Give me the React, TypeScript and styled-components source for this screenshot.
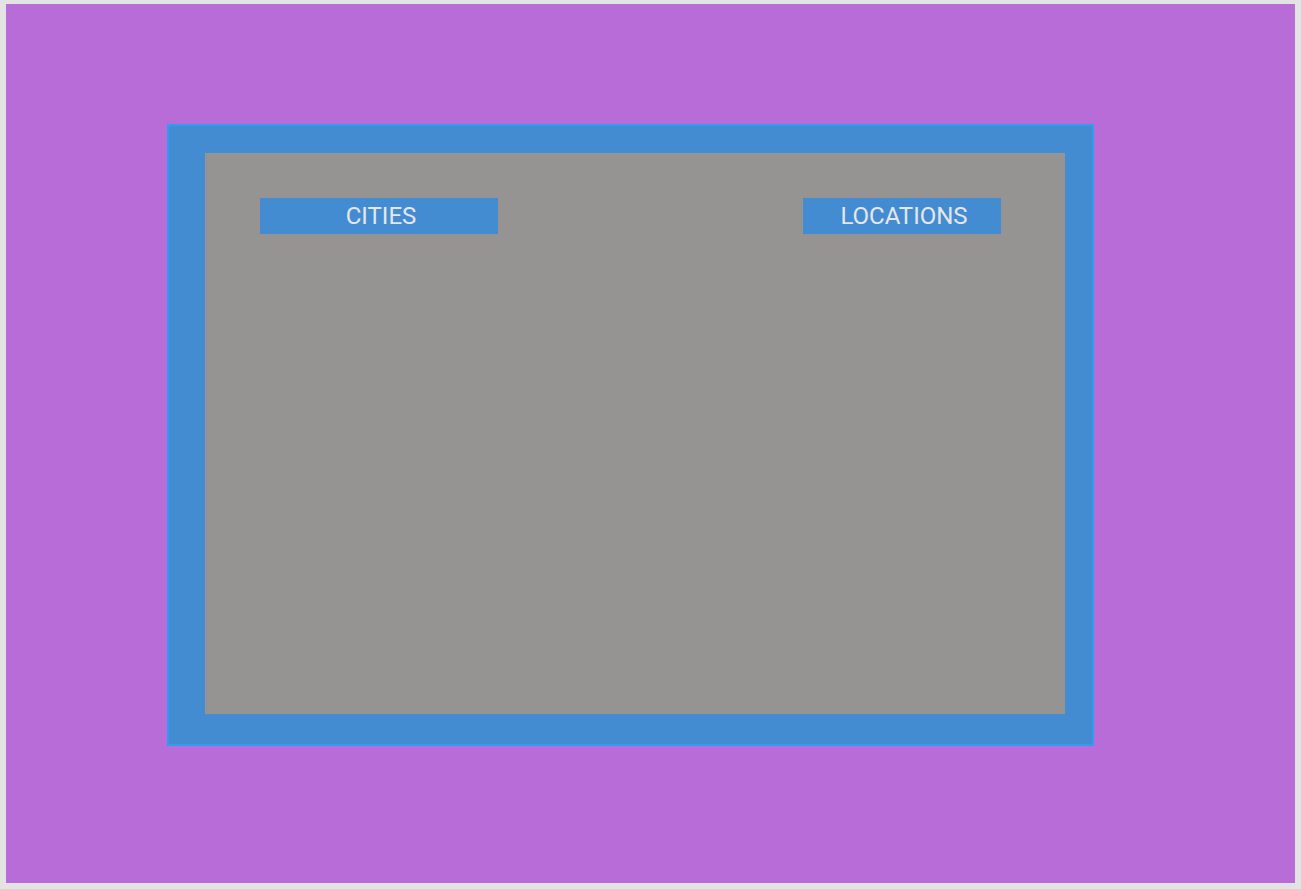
import React from "react";
import styled, { createGlobalStyle } from "styled-components";

const Global = createGlobalStyle`
  html, body { margin: 0; padding: 0; background: #e4e3e3; }
  body { font-family: Roboto, "Liberation Sans", sans-serif; }
  * { box-sizing: border-box; }
`;

const Page = styled.div`
  padding: 4px 6px 6px 6px;
  height: 889px;
`;

const Stage = styled.main`
  height: 879px;
  background: #b86cd8;
  padding: 120px 201px 137px 161px;
`;

const Frame = styled.section`
  height: 622px;
  background: #438cd2;
  border: 2px solid #2f9cf2;
  padding: 27px 27px 30px 36px;
`;

const Panel = styled.div`
  height: 100%;
  background: #959492;
  padding: 45px 64px 0 55px;
  display: flex;
  justify-content: space-between;
  align-items: flex-start;
`;

const Tab = styled.button<{ $w: number }>`
  width: ${(p) => p.$w}px;
  height: 36px;
  border: none;
  margin: 0;
  padding: 0 0 0 4px;
  background: #438cd2;
  color: #e6e6ea;
  font-family: Roboto, "Liberation Sans", sans-serif;
  font-size: 24px;
  font-weight: 400;
  line-height: 36px;
  text-align: center;
  cursor: pointer;
`;

export default function App() {
  return (
    <>
      <Global />
      <Page>
        <Stage>
          <Frame>
            <Panel>
              <Tab $w={238}>CITIES</Tab>
              <Tab $w={198}>LOCATIONS</Tab>
            </Panel>
          </Frame>
        </Stage>
      </Page>
    </>
  );
}
